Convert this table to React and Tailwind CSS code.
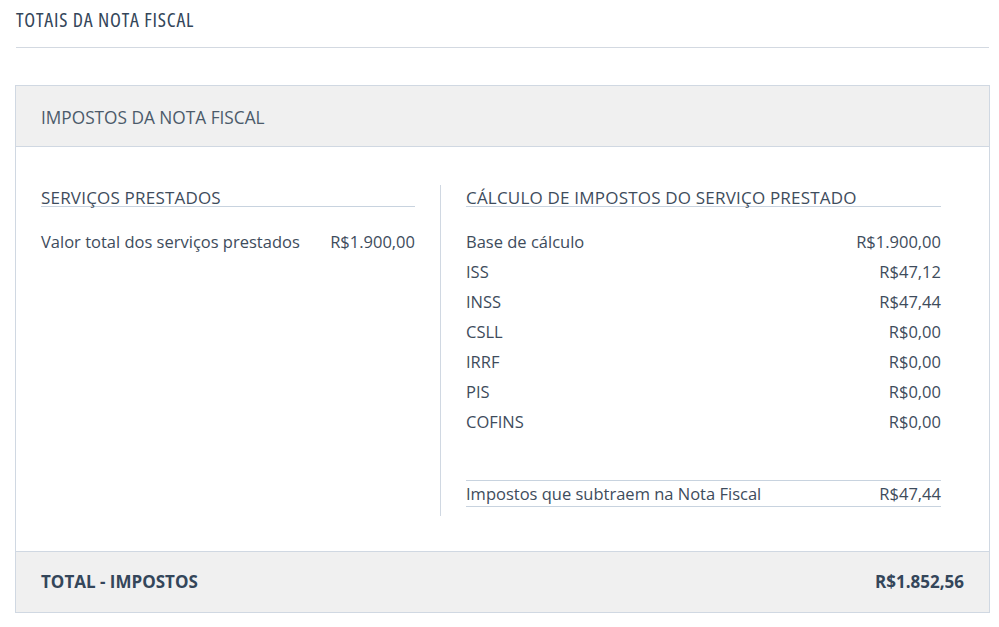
const SERVICOS = [['Valor total dos serviços prestados', 'R$1.900,00']]

const CALCULO = [
  ['Base de cálculo', 'R$1.900,00'],
  ['ISS', 'R$47,12'],
  ['INSS', 'R$47,44'],
  ['CSLL', 'R$0,00'],
  ['IRRF', 'R$0,00'],
  ['PIS', 'R$0,00'],
  ['COFINS', 'R$0,00'],
]

function Row({ label, value }) {
  return (
    <div className="flex justify-between items-center h-[30px]">
      <span>{label}</span>
      <span>{value}</span>
    </div>
  )
}

export default function App() {
  return (
    <div className="bg-white min-h-[627px] pl-[15px] pr-[9px] text-[#3e4c5c] font-['Open_Sans',Arial,sans-serif]">
      {/* Page title */}
      <div className="mx-px h-[48px] border-b border-[#d3d9e1] flex items-start pt-[6px]">
        <h1 className="text-[20px] leading-[28px] tracking-[0.8px] text-[#34465a] font-stretch-condensed">
          TOTAIS DA NOTA FISCAL
        </h1>
      </div>

      <div className="mt-[37px] border border-[#d0d8e2]">
        {/* Header */}
        <div className="h-[61px] bg-[#f0f0f0] border-b border-[#d0d8e2] flex items-center px-[25px] pt-[3px]">
          <h2 className="text-[17.25px] text-[#4b5a6a]">IMPOSTOS DA NOTA FISCAL</h2>
        </div>

        {/* Body */}
        <div className="flex pt-[38px] pb-[44px] px-[25px] text-[16.5px] leading-[20px]">
          <div className="w-[374px]">
            <h3 className="border-b border-[#c8d3df] text-[17px] leading-[17px] pt-[4px] mb-[20px] tracking-[0.2px]">SERVIÇOS PRESTADOS</h3>
            {SERVICOS.map(([l, v]) => <Row key={l} label={l} value={v} />)}
          </div>

          <div className="w-px bg-[#d0d8e2] mx-[25px] -mb-[9px]" />

          <div className="w-[475px]">
            <h3 className="border-b border-[#c8d3df] text-[17px] leading-[17px] pt-[4px] mb-[20px] tracking-[0.2px]">CÁLCULO DE IMPOSTOS DO SERVIÇO PRESTADO</h3>
            {CALCULO.map(([l, v]) => <Row key={l} label={l} value={v} />)}
            <div className="mt-[43px] border-y border-[#c8d3df] h-[27px] flex justify-between items-center">
              <span>Impostos que subtraem na Nota Fiscal</span>
              <span>R$47,44</span>
            </div>
          </div>
        </div>

        {/* Footer */}
        <div className="h-[61px] bg-[#f0f0f0] border-t border-[#d0d8e2] flex items-center justify-between px-[25px] font-bold text-[17px] text-[#34465a]">
          <span>TOTAL - IMPOSTOS</span>
          <span>R$1.852,56</span>
        </div>
      </div>
    </div>
  )
}
